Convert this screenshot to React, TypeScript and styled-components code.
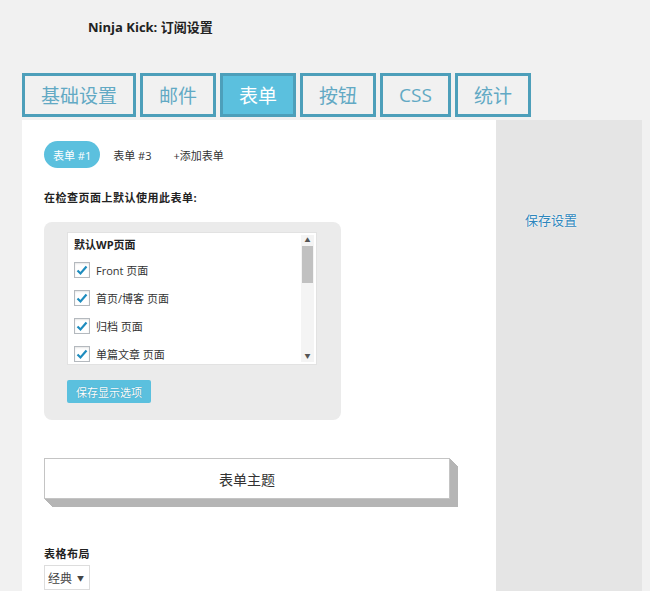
import React from "react";
import styled, { createGlobalStyle } from "styled-components";

const GlobalStyle = createGlobalStyle`
  html, body {
    margin: 0;
    padding: 0;
    background: #f1f1f1;
    font-family: "Open Sans", "Noto Sans CJK SC", sans-serif;
    color: #333;
  }
`;

const Page = styled.div`
  padding-left: 22px;
  padding-right: 8px;
  min-height: 591px;
  display: flex;
  flex-direction: column;
`;

const Title = styled.h1`
  margin: 0;
  padding: 18px 0 0 66px;
  height: 73px;
  box-sizing: border-box;
  font-size: 13px;
  line-height: 18px;
  font-weight: 700;
  color: #222;
`;

const TabBar = styled.div`
  display: flex;
  gap: 4px;
`;

const Tab = styled.div<{ active?: boolean }>`
  height: 44px;
  box-sizing: border-box;
  padding: 0 16px;
  border: 3px solid #4d9fba;
  display: flex;
  align-items: center;
  font-size: 19px;
  font-weight: 400;
  color: ${({ active }) => (active ? "#fff" : "#62a9c4")};
  background: ${({ active }) => (active ? "#5bc0de" : "transparent")};
`;

const Body = styled.div`
  margin-top: 3px;
  flex: 1;
  display: flex;
`;

const Main = styled.div`
  width: 474px;
  background: #fff;
  padding: 21px 22px 0;
  box-sizing: border-box;
`;

const Sidebar = styled.div`
  width: 146px;
  background: #e5e5e5;
  padding: 88px 0 0 29px;
  box-sizing: border-box;
`;

const SaveLink = styled.a`
  font-size: 13px;
  color: #2f86bb;
  text-shadow: 0 0 1px #fff, 0 0 2px #fff;
  text-decoration: none;
`;

const PillRow = styled.div`
  display: flex;
  align-items: center;
`;

const Pill = styled.span<{ active?: boolean }>`
  height: 27px;
  display: flex;
  align-items: center;
  padding: 0 9px;
  margin-right: 4px;
  border-radius: 14px;
  font-size: 11px;
  color: ${({ active }) => (active ? "#fff" : "#333")};
  background: ${({ active }) => (active ? "#5bc0de" : "transparent")};
`;

const Label = styled.div`
  font-size: 11px;
  font-weight: 700;
  color: #222;
  letter-spacing: 0.5px;
`;

const FormLabel = styled(Label)`
  margin-top: 21px;
`;

const DisplayBox = styled.div`
  margin-top: 17px;
  width: 297px;
  box-sizing: border-box;
  background: #ebebeb;
  border-radius: 8px;
  padding: 10px 24px 17px 23px;
`;

const List = styled.div`
  height: 133px;
  background: #fff;
  border: 1px solid #e2e2e2;
  box-sizing: border-box;
  display: flex;
`;

const ListItems = styled.div`
  flex: 1;
  padding: 0 0 0 6px;
  overflow: hidden;
`;

const ScrollTrack = styled.div`
  width: 13px;
  margin: 2px 2px 2px 0;
  background: #f4f4f4;
  display: flex;
  flex-direction: column;
  align-items: center;
`;

const ScrollArrow = styled.div`
  height: 11px;
  font-size: 6px;
  line-height: 11px;
  color: #555;
`;

const ScrollThumb = styled.div`
  width: 11px;
  height: 37px;
  background: #c1c1c1;
`;

const ScrollRest = styled.div`
  flex: 1;
`;

const ListHeader = styled.div`
  height: 20px;
  padding-top: 3px;
  font-size: 11px;
  font-weight: 700;
  color: #222;
`;

const Row = styled.label`
  height: 28px;
  display: flex;
  align-items: center;
  gap: 6px;
  font-size: 11px;
  color: #333;
`;

const Check = styled.span`
  width: 14px;
  height: 14px;
  border: 1px solid #b4b9be;
  background: #fff;
  box-shadow: inset 0 1px 2px rgba(0, 0, 0, 0.1);
  display: flex;
  align-items: center;
  justify-content: center;
`;

const SmallButton = styled.button`
  margin-top: 15px;
  height: 23px;
  padding: 0 9px;
  border: none;
  border-radius: 2px;
  background: #5bc0de;
  color: #fff;
  font-family: inherit;
  font-size: 11px;
  text-shadow: 0 0 1px #2a88a8;
`;

const ThemeBox = styled.div`
  margin-top: 38px;
  width: 406px;
  height: 41px;
  box-sizing: border-box;
  border: 1px solid #c4c4c4;
  background: #fff;
  display: flex;
  align-items: center;
  justify-content: center;
  font-size: 14px;
  color: #333;
  box-shadow: 1px 1px #b5b5b5, 2px 2px #b5b5b5, 3px 3px #b5b5b5,
    4px 4px #b5b5b5, 5px 5px #b5b5b5, 6px 6px #b5b5b5, 7px 7px #b5b5b5,
    8px 8px #b5b5b5;
`;

const LayoutLabel = styled(Label)`
  margin-top: 46px;
`;

const Select = styled.div`
  margin-top: 4px;
  display: inline-flex;
  align-items: center;
  gap: 5px;
  height: 23px;
  padding: 0 5px 0 3px;
  border: 1px solid #ddd;
  background: #fff;
  font-size: 12px;
  color: #444;
`;

const Caret = styled.span`
  font-size: 7px;
`;

const CheckMark = () => (
  <svg width="12" height="12" viewBox="0 0 12 12">
    <path
      d="M1.5 6.5 L4.5 9.5 L10.5 2.5"
      fill="none"
      stroke="#1e8cbe"
      strokeWidth="2.2"
    />
  </svg>
);

const TABS = ["基础设置", "邮件", "表单", "按钮", "CSS", "统计"];
const PAGES = ["Front 页面", "首页/博客 页面", "归档 页面", "单篇文章 页面"];

export default function App() {
  return (
    <>
      <GlobalStyle />
      <Page>
        <Title>Ninja Kick: 订阅设置</Title>
        <TabBar>
          {TABS.map((t) => (
            <Tab key={t} active={t === "表单"}>
              {t}
            </Tab>
          ))}
        </TabBar>
        <Body>
          <Main>
            <PillRow>
              <Pill active>表单 #1</Pill>
              <Pill>表单 #3</Pill>
              <Pill>+添加表单</Pill>
            </PillRow>
            <FormLabel>在检查页面上默认使用此表单:</FormLabel>
            <DisplayBox>
              <List>
                <ListItems>
                  <ListHeader>默认WP页面</ListHeader>
                  {PAGES.map((p) => (
                    <Row key={p}>
                      <Check>
                        <CheckMark />
                      </Check>
                      {p}
                    </Row>
                  ))}
                </ListItems>
                <ScrollTrack>
                  <ScrollArrow>▲</ScrollArrow>
                  <ScrollThumb />
                  <ScrollRest />
                  <ScrollArrow>▼</ScrollArrow>
                </ScrollTrack>
              </List>
              <SmallButton>保存显示选项</SmallButton>
            </DisplayBox>
            <ThemeBox>表单主题</ThemeBox>
            <LayoutLabel>表格布局</LayoutLabel>
            <Select>
              经典 <Caret>▼</Caret>
            </Select>
          </Main>
          <Sidebar>
            <SaveLink href="#">保存设置</SaveLink>
          </Sidebar>
        </Body>
      </Page>
    </>
  );
}
